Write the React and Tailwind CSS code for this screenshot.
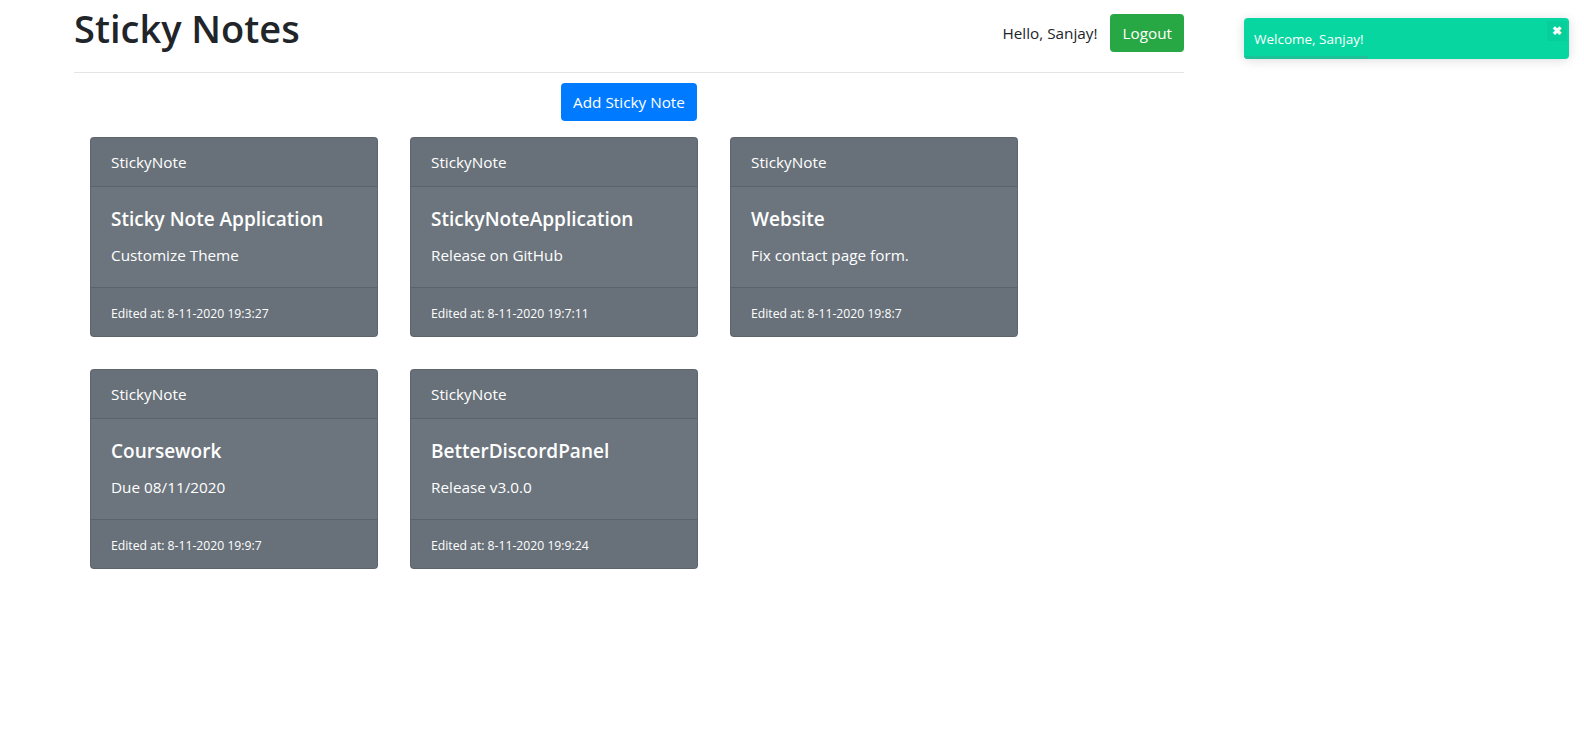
import React from 'react';

const notes = [
  { title: 'Sticky Note Application', text: 'Customize Theme', edited: '8-11-2020 19:3:27' },
  { title: 'StickyNoteApplication', text: 'Release on GitHub', edited: '8-11-2020 19:7:11' },
  { title: 'Website', text: 'Fix contact page form.', edited: '8-11-2020 19:8:7' },
  { title: 'Coursework', text: 'Due 08/11/2020', edited: '8-11-2020 19:9:7' },
  { title: 'BetterDiscordPanel', text: 'Release v3.0.0', edited: '8-11-2020 19:9:24' },
];

const NoteCard = ({ note }) => (
  <div className="w-[288px] m-4 bg-[#6c757d] text-white rounded-[4px] border border-[rgba(0,0,0,0.125)] flex flex-col">
    {/* Header */}
    <div className="px-5 py-3 leading-6 text-[15.3px] bg-[rgba(0,0,0,0.03)] border-b border-[rgba(0,0,0,0.125)]">
      StickyNote
    </div>

    {/* Body */}
    <div className="p-5">
      <h5 className="text-[19px] font-semibold leading-[24px] mb-3">{note.title}</h5>
      <p className="text-[15.3px] leading-6">{note.text}</p>
    </div>

    {/* Footer */}
    <div className="px-5 pt-[14px] pb-[10px] h-[49px] leading-6 text-[12.2px] bg-[rgba(0,0,0,0.03)] border-t border-[rgba(0,0,0,0.125)]">
      Edited at: {note.edited}
    </div>
  </div>
);

export default function App() {
  return (
    <div
      className="relative min-h-screen bg-white text-[#212529]"
      style={{ fontFamily: '"Segoe UI", "Open Sans", "Noto Sans", sans-serif' }}
    >
      <div className="ml-[59px] w-[1140px] px-[15px]">
        {/* Header */}
        <div className="h-[73px] border-b border-[rgba(0,0,0,0.1)] flex items-start justify-between">
          <h1 className="text-[38px] leading-[48px] font-semibold mt-[4px]">Sticky Notes</h1>
          <div className="flex items-center gap-[13px] mt-[14px]">
            <span className="text-[15.3px]">Hello, Sanjay!</span>
            <button className="h-[38px] px-3 rounded-[4px] bg-[#28a745] text-white text-[15.3px]">
              Logout
            </button>
          </div>
        </div>

        {/* Add button */}
        <div className="flex justify-center mt-[10px]">
          <button className="h-[38px] px-3 rounded-[4px] bg-[#007bff] text-white text-[15.3px]">
            Add Sticky Note
          </button>
        </div>

        {/* Notes */}
        <div className="flex flex-wrap">
          {notes.map((note) => (
            <NoteCard key={note.edited} note={note} />
          ))}
        </div>
      </div>

      {/* Toast */}
      <div className="absolute top-[18px] right-[15px] w-[325px] h-[41px] bg-[#07d6a0] rounded-[4px] shadow-[0_1px_10px_rgba(0,0,0,0.1),0_2px_15px_rgba(0,0,0,0.05)] overflow-hidden">
        <div className="pl-[10px] pt-[11px] text-[13.5px] leading-[20px] text-white">Welcome, Sanjay!</div>
        <button className="absolute top-[3px] right-[2px] w-5 h-5 flex items-center justify-center bg-[rgba(0,0,0,0.03)] text-white text-[12px] font-bold leading-none">
          ✖
        </button>
        <div className="absolute left-0 bottom-0 h-[3px] w-[124px] bg-[#1fc298]" />
      </div>
    </div>
  );
}
